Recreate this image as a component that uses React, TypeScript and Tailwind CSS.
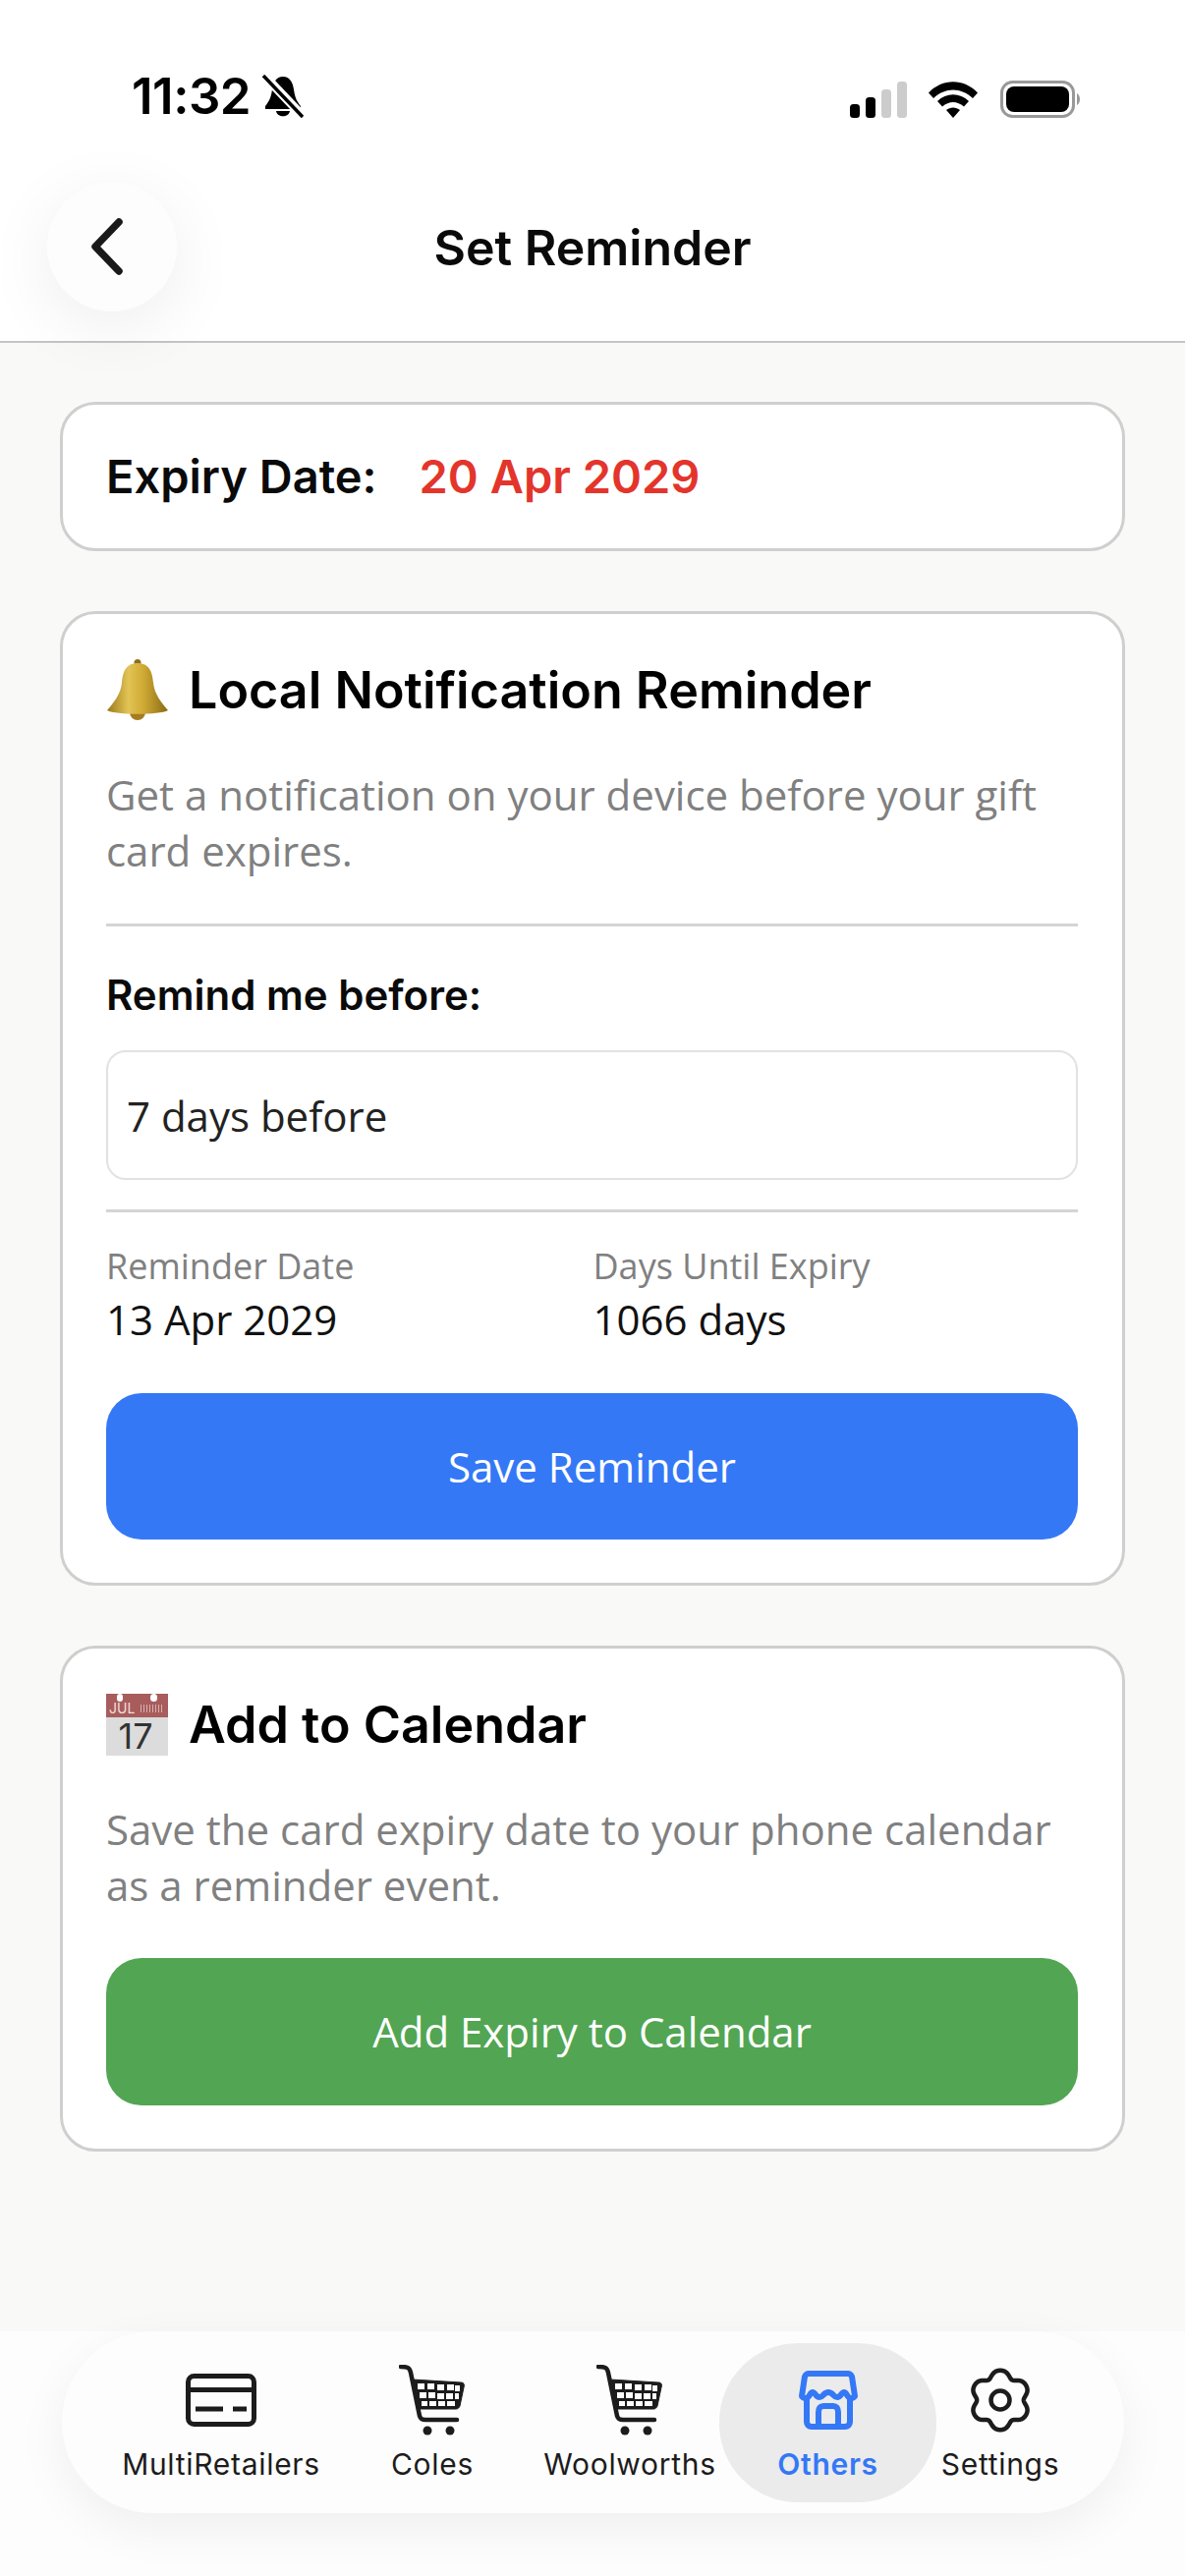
const inter = "font-['Inter',sans-serif]";

function BackIcon() {
  return (
    <svg width="32" height="58" viewBox="0 0 32 58" fill="none" stroke="#1a1a1a" strokeWidth="7.5" strokeLinecap="round" strokeLinejoin="round">
      <path d="M28 4 L4 29 L28 54" />
    </svg>
  );
}

function StatusIcons() {
  return (
    <div className="flex items-end">
      <svg width="58" height="37" viewBox="0 0 58 37">
        <rect x="0" y="23" width="10" height="14" rx="3.5" fill="#000" />
        <rect x="16" y="16" width="10" height="21" rx="3.5" fill="#000" />
        <rect x="32" y="8" width="10" height="29" rx="3.5" fill="#ccc" />
        <rect x="48" y="0" width="10" height="37" rx="3.5" fill="#ccc" />
      </svg>
      <svg className="ml-[22px]" width="50" height="37" viewBox="0 0 50 37">
        <path d="M0 11.5 C14 -3.5 36 -3.5 50 11.5 L45 17 C33 5.5 17 5.5 5 17 Z" fill="#000" />
        <path d="M9 20 C18 11 32 11 41 20 L36 25.5 C29 19.5 21 19.5 14 25.5 Z" fill="#000" />
        <path d="M18 29 C22 25.5 28 25.5 32 29 L25 37 Z" fill="#000" />
      </svg>
      <svg className="ml-[23px]" width="82" height="38" viewBox="0 0 82 38">
        <rect x="1.5" y="1.5" width="73" height="35" rx="11" fill="none" stroke="#999" strokeWidth="3" />
        <rect x="6" y="6" width="64" height="26" rx="8" fill="#000" />
        <path d="M78 13 C82 15 82 23 78 25 Z" fill="#999" />
      </svg>
    </div>
  );
}

function MutedBell() {
  return (
    <svg width="42" height="44" viewBox="0 0 42 44">
      <path d="M21 2 C28 2 31 8 32 15 C33 23 35 27 39 32 L39 35 L3 35 L3 32 C7 27 9 23 10 15 C11 8 14 2 21 2 Z" fill="#000" />
      <path d="M14 37 L28 37 C27 44 15 44 14 37 Z" fill="#000" />
      <path d="M3 2 L41 42" stroke="#fff" strokeWidth="9" />
      <path d="M1 1 L41 43" stroke="#000" strokeWidth="3.5" />
    </svg>
  );
}

function BellEmoji() {
  return (
    <svg width="64" height="62" viewBox="0 0 64 62">
      <defs>
        <linearGradient id="gold" x1="0" y1="0" x2="1" y2="0">
          <stop offset="0" stopColor="#9a7a1c" />
          <stop offset="0.35" stopColor="#e2c455" />
          <stop offset="0.6" stopColor="#cfa934" />
          <stop offset="1" stopColor="#8a6a14" />
        </linearGradient>
      </defs>
      <circle cx="32" cy="3.5" r="3.5" fill="#8e6d1c" />
      <circle cx="32" cy="54" r="8" fill="#a57c20" />
      <path d="M32 4 C44 4 47 13 48 24 C49 35 56 44 63 52 C54 57 10 57 1 52 C8 44 15 35 16 24 C17 13 20 4 32 4 Z" fill="url(#gold)" />
    </svg>
  );
}

function CalendarEmoji() {
  return (
    <div className="relative w-[63px] h-[63px] shrink-0 bg-[#dcdcdc]">
      <div className="h-[24px] bg-[#a85c5c] flex items-center pl-[3px] pt-[6px] text-[14px] leading-[16px] text-[#f2dede] font-['Inter',sans-serif]">
        JUL
        <div className="ml-[6px] flex h-[8px] items-end gap-[2px]">
          {[0, 1, 2, 3, 4, 5, 6, 7].map((i) => (
            <div key={i} className="h-full w-[1px] bg-[#d9b0b0]" />
          ))}
        </div>
      </div>
      <div className="text-center text-[36px] leading-[39px] text-[#333] font-['Inter',sans-serif] pr-[3px]">17</div>
      <div className="absolute left-[11px] top-0 w-[6px] h-[8px] rounded-full bg-white" />
      <div className="absolute left-[45px] top-0 w-[7px] h-[8px] rounded-full bg-white" />
    </div>
  );
}

function CardIcon() {
  return (
    <svg width="72" height="54" viewBox="0 0 72 54" fill="none" stroke="#1c1c1c">
      <rect x="2.5" y="2.5" width="67" height="49" rx="6" strokeWidth="5" />
      <path d="M2 16.5 H70" strokeWidth="5" />
      <path d="M10 36 H38 M48 36 H62" strokeWidth="5" />
    </svg>
  );
}

function CartIcon() {
  return (
    <svg width="68" height="72" viewBox="0 0 68 72" fill="none" stroke="#1c1c1c">
      <path d="M2 2 C9 2 11 3 12 8 L21 52 C22 55 23 56 27 56 H59" strokeWidth="4.5" strokeLinecap="round" strokeLinejoin="round" />
      <path d="M14 15 L63 18 C66 18 67 20 66 23 L62 42 C61 44 60 45 58 45 H20 Z" fill="#1c1c1c" strokeWidth="1" />
      <g fill="#fff" stroke="none">
        <rect x="19" y="19" width="7" height="6" />
        <rect x="29" y="19" width="7" height="6" />
        <rect x="39" y="20" width="7" height="6" />
        <rect x="49" y="20" width="7" height="6" />
        <rect x="21" y="28" width="7" height="6" />
        <rect x="30" y="28" width="7" height="6" />
        <rect x="39" y="29" width="7" height="6" />
        <rect x="48" y="29" width="7" height="6" />
        <rect x="57" y="21" width="5" height="6" />
        <rect x="57" y="29" width="4" height="6" />
        <rect x="23" y="37" width="6" height="5" />
        <rect x="31" y="37" width="7" height="5" />
        <rect x="40" y="37" width="7" height="5" />
        <rect x="49" y="37" width="8" height="5" />
      </g>
      <circle cx="29" cy="67" r="4.5" fill="#1c1c1c" stroke="none" />
      <circle cx="52" cy="67" r="4.5" fill="#1c1c1c" stroke="none" />
    </svg>
  );
}

function StoreIcon() {
  return (
    <svg width="60" height="60" viewBox="0 0 60 60" fill="none" stroke="#3478f6" strokeWidth="6" strokeLinejoin="round" strokeLinecap="round">
      <path d="M10 3 H50 C52 3 53 4 54 6 L57 26 C57 27 55 28 53 28 C49 28 49 22 46 22 C43 22 43 27 39 27 C35 27 35 22 30 22 C25 22 25 27 21 27 C17 27 17 22 14 22 C11 22 11 28 7 28 C5 28 3 27 3 26 L6 6 C7 4 8 3 10 3 Z" />
      <path d="M8 28 V52 C8 55 10 57 13 57 H47 C50 57 52 55 52 52 V28" />
      <path d="M20 57 V42 C20 38 22 36 25 36 H35 C38 36 40 38 40 42 V57" />
    </svg>
  );
}

function GearIcon() {
  // six soft lobes, one pointing straight up
  const pts: string[] = [];
  for (let i = 0; i <= 180; i++) {
    const a = (i / 180) * Math.PI * 2;
    const r = 27.5 + 3.2 * Math.cos(6 * a) - 0.5 * Math.cos(12 * a);
    pts.push(`${(32 + r * Math.sin(a)).toFixed(2)} ${(33 - r * Math.cos(a)).toFixed(2)}`);
  }
  return (
    <svg width="64" height="66" viewBox="0 0 64 66" fill="none" stroke="#1c1c1c" strokeWidth="4.5">
      <path d={`M${pts.join(' L')} Z`} strokeLinejoin="round" />
      <circle cx="32" cy="33" r="9.5" />
    </svg>
  );
}

function Divider() {
  return <div className="h-[3px] bg-[#d4d4d2]" />;
}

const tabs = [
  { label: 'MultiRetailers', icon: <CardIcon />, box: 'w-[250px]' },
  { label: 'Coles', icon: <CartIcon />, box: 'w-[180px]' },
  { label: 'Woolworths', icon: <CartIcon />, box: 'w-[182px] ml-[20px]' },
  { label: 'Others', icon: <StoreIcon />, box: 'w-[221px]', active: true },
  { label: 'Settings', icon: <GearIcon />, box: 'w-[130px]' },
];

export default function App() {
  return (
    <div className="w-[1206px] h-[2622px] flex flex-col bg-[#f9f9f7] overflow-hidden">
      {/* Header */}
      <div className="h-[349px] shrink-0 bg-white border-b-2 border-[#c4c4c4]">
        <div className="flex items-end justify-between pl-[134px] pr-[106px] pt-[76px]">
          <div className="flex items-center">
            <span className={`${inter} text-[51px] leading-[44px] font-semibold text-black tracking-[-0.5px]`}>11:32</span>
            <span className="ml-[12px]"><MutedBell /></span>
          </div>
          <StatusIcons />
        </div>
        <div className="relative mt-[65px] flex h-[133px] items-center justify-center">
          <div className="absolute left-[48px] top-0 flex h-[132px] w-[132px] items-center justify-center rounded-full bg-[#fdfdfd] shadow-[0_16px_70px_rgba(0,0,0,0.07)]">
            <div className="mr-[10px]"><BackIcon /></div>
          </div>
          <span className={`${inter} text-[50px] font-semibold text-[#0a0a0a] leading-[60px]`}>Set Reminder</span>
        </div>
      </div>

      {/* Content */}
      <div className="flex-1 px-[61px] pt-[60px] flex flex-col gap-[61px]">
        <div className="h-[152px] flex items-center rounded-[36px] border-[3px] border-[#cfcfcf] bg-white pl-[44px] pr-[45px]">
          <span className={`${inter} text-[47px] font-semibold text-[#0a0a0a]`}>Expiry Date:</span>
          <span className={`${inter} ml-[43px] text-[47px] font-semibold text-[#e3352b]`}>20 Apr 2029</span>
        </div>

        <div className="rounded-[36px] border-[3px] border-[#cfcfcf] bg-white pl-[44px] pr-[45px] pt-[48px] pb-[44px]">
          <div className="flex h-[60px] items-center">
            <div className="-mt-[2px]"><BellEmoji /></div>
            <span className={`${inter} ml-[20px] text-[52px] font-semibold text-black`}>Local Notification Reminder</span>
          </div>
          <p className="mt-[47px] font-['Open_Sans',sans-serif] text-[42px] leading-[57px] text-[#808080]">
            Get a notification on your device before your gift card expires.
          </p>
          <div className="mt-[46px]"><Divider /></div>
          <div className={`${inter} mt-[45px] h-[50px] text-[42px] leading-[50px] font-semibold text-[#0a0a0a]`}>Remind me before:</div>
          <div className="mt-[31px] flex h-[132px] items-center rounded-[20px] border-2 border-[#e2e2e2] px-[19px] font-['Open_Sans',sans-serif] text-[42px] text-[#222]">
            7 days before
          </div>
          <div className="mt-[30px]"><Divider /></div>
          <div className="mt-[32px] grid grid-cols-2">
            <div>
              <div className="h-[46px] font-['Open_Sans',sans-serif] text-[36px] leading-[46px] text-[#808080]">Reminder Date</div>
              <div className="mt-[4px] h-[54px] font-['Open_Sans',sans-serif] text-[42px] leading-[54px] text-[#111]">13 Apr 2029</div>
            </div>
            <div className="pl-[1px]">
              <div className="h-[46px] font-['Open_Sans',sans-serif] text-[36px] leading-[46px] text-[#808080]">Days Until Expiry</div>
              <div className="mt-[4px] h-[54px] font-['Open_Sans',sans-serif] text-[42px] leading-[54px] text-[#111]">1066 days</div>
            </div>
          </div>
          <div className="mt-[48px] flex h-[149px] items-center justify-center rounded-[36px] bg-[#3478f6] font-['Open_Sans',sans-serif] text-[42px] text-white">
            Save Reminder
          </div>
        </div>

        <div className="rounded-[36px] border-[3px] border-[#cfcfcf] bg-white pl-[44px] pr-[45px] pt-[48px] pb-[44px]">
          <div className="flex h-[60px] items-center">
            <div className="-mt-[1px]"><CalendarEmoji /></div>
            <span className={`${inter} ml-[21px] text-[52px] font-semibold text-black`}>Add to Calendar</span>
          </div>
          <p className="mt-[47px] font-['Open_Sans',sans-serif] text-[42px] leading-[57px] text-[#808080]">
            Save the card expiry date to your phone calendar as a reminder event.
          </p>
          <div className="mt-[46px] flex h-[150px] items-center justify-center rounded-[36px] bg-[#52a552] pb-[2px] font-['Open_Sans',sans-serif] text-[42px] text-white">
            Add Expiry to Calendar
          </div>
        </div>
      </div>

      {/* Tab bar */}
      <div className="h-[249px] shrink-0 bg-[#fdfdfd] px-[63px]">
        <div className="flex h-[185px] w-[1081px] items-center rounded-full bg-[#fdfdfd] pl-[37px] shadow-[0_16px_50px_rgba(0,0,0,0.06)]">
          {tabs.map((t) => (
            <div
              key={t.label}
              className={`${t.box} flex h-[162px] flex-col items-center rounded-[80px] ${t.active ? 'bg-[#ebebeb]' : ''}`}
            >
              <div className="flex h-[100px] shrink-0 items-center pt-[16px]">{t.icon}</div>
              <span className={`${inter} mt-[5px] whitespace-nowrap text-[30px] leading-[36px] tracking-[0.7px] ${t.active ? 'text-[#3478f6] font-semibold' : 'text-[#1c1c1c] font-normal'}`}>
                {t.label}
              </span>
            </div>
          ))}
        </div>
      </div>
    </div>
  );
}
